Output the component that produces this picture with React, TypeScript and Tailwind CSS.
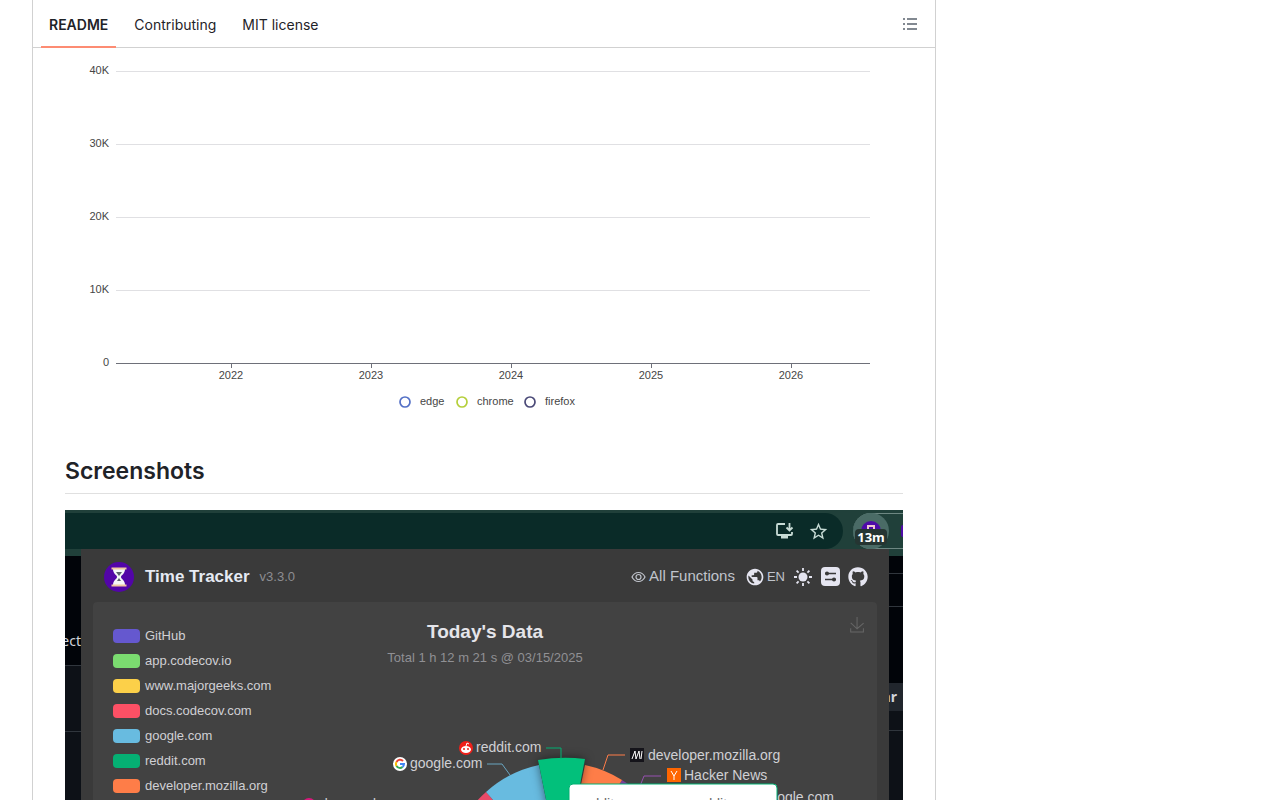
import { ReactNode } from "react";
import { FaGithub } from "react-icons/fa";
import { MdPublic, MdStarBorder } from "react-icons/md";

const TABS = ["README", "Contributing", "MIT license"]

const Y_TICKS = [
  { label: "40K", y: 23 },
  { label: "30K", y: 96 },
  { label: "20K", y: 169 },
  { label: "10K", y: 242 },
  { label: "0", y: 315 },
]

const X_TICKS = [
  { label: "2022", x: 166 },
  { label: "2023", x: 306 },
  { label: "2024", x: 446 },
  { label: "2025", x: 586 },
  { label: "2026", x: 726 },
]

const BROWSERS = [
  { name: "edge", color: "#5470c6", x: 340 },
  { name: "chrome", color: "#b5cf3b", x: 397 },
  { name: "firefox", color: "#4b4a78", x: 465 },
]

const SITES = [
  { name: "GitHub", color: "bg-[#6558cf]" },
  { name: "app.codecov.io", color: "bg-[#7bdc70]" },
  { name: "www.majorgeeks.com", color: "bg-[#fcd049]" },
  { name: "docs.codecov.com", color: "bg-[#fd5065]" },
  { name: "google.com", color: "bg-[#68bbe0]" },
  { name: "reddit.com", color: "bg-[#05b073]" },
  { name: "developer.mozilla.org", color: "bg-[#fe7d48]" },
]

function Tabs() {
  return (
    <div className="flex h-12 items-stretch justify-between border-b border-[#d1d1d1] pl-2 pr-4">
      <nav className="-mb-px flex gap-2.5">
        {TABS.map((tab, i) => (
          <a
            key={tab}
            href="#"
            className={`flex items-center border-b-2 px-2 pt-1 text-sm text-[#1f2328] ${i === 0 ? "border-[#fd8c73] font-semibold" : "border-transparent"}`}
          >
            {tab}
          </a>
        ))}
      </nav>
      <button type="button" aria-label="Outline" className="flex items-center text-[#59636e]">
        <svg width="18" height="16" viewBox="0 0 18 16" fill="none" stroke="currentColor" strokeWidth="1.5">
          <path d="M6 3h10M6 8h10M6 13h10" />
          <path d="M2 3h2M2 8h2M2 13h2" />
        </svg>
      </button>
    </div>
  )
}

function UserChart() {
  return (
    <svg viewBox="0 0 838 392" className="block w-full font-['Liberation_Sans',sans-serif]" fontSize="11" fill="#464646">
      {Y_TICKS.map(({ label, y }) => (
        <g key={label}>
          <text x="44" y={y + 3} textAnchor="end">{label}</text>
          <path d={`M51 ${y + 0.5}H805`} stroke={label === "0" ? "#6e7079" : "#e0e0e3"} />
        </g>
      ))}
      {X_TICKS.map(({ label, x }) => (
        <g key={label}>
          <path d={`M${x + 0.5} 315v5`} stroke="#6e7079" />
          <text x={x} y="331" textAnchor="middle">{label}</text>
        </g>
      ))}
      {BROWSERS.map(({ name, color, x }) => (
        <g key={name}>
          <circle cx={x} cy="354" r="5" fill="#fff" stroke={color} strokeWidth="1.7" />
          <text x={x + 15} y="357">{name}</text>
        </g>
      ))}
    </svg>
  )
}

function BrowserBar() {
  return (
    <div className="flex h-[39px] bg-[#20403a] pt-[3px]">
      <div className="flex min-w-0 flex-1 items-center justify-end gap-3.5 rounded-r-full bg-[#0a2b28] pr-3.5 text-[#c8dcd6]">
        <svg width="19" height="18" viewBox="0 0 19 18" fill="none" stroke="currentColor" strokeWidth="1.8">
          <path d="M10 2H3a1 1 0 0 0-1 1v9a1 1 0 0 0 1 1h13a1 1 0 0 0 1-1v-2" />
          <path d="M14.500 1v7M11.500 5.500l3 3 3-3" />
          <path d="M6 15h7" strokeWidth="3" />
        </svg>
        <MdStarBorder size={21} />
      </div>
      <div className="flex w-[60px] pl-2.5">
        <div className="flex flex-1 items-center justify-between rounded-l-full border-y border-[#6d8782]">
          <div className="relative flex h-9 w-9 items-start justify-center rounded-full bg-[#4a6b66] pt-2">
            <svg width="20" height="20" viewBox="0 0 20 20">
              <circle cx="10" cy="10" r="10" fill="#4f0ba8" />
              <path d="M6 5h8M7 6v4M13 6v4" stroke="#efc9d0" strokeWidth="2" />
            </svg>
            <span className="absolute top-4 rounded bg-[#253532] px-0.5 font-['Noto_Sans'] text-[13px] leading-4 font-bold text-white">13m</span>
          </div>
          <span className="h-3 w-0.5 rounded-l bg-[#4f0ba8]" />
        </div>
      </div>
    </div>
  )
}

function Hourglass() {
  return (
    <svg width="30" height="30" viewBox="0 0 30 30">
      <circle cx="15" cy="15" r="15" fill="#5205a8" />
      <path d="M9 7h12c0 5-4 6-4 8s4 3 4 8H9c0-5 4-6 4-8s-4-3-4-8z" fill="#f4f6f8" />
      <path d="M12 10h6l-3 4zM15 16l2 3h-4z" fill="#59616b" />
      <path d="M7.500 6.500h15M7.500 23.500h15" stroke="#efc9a0" strokeWidth="2" />
    </svg>
  )
}

function PopupHeader() {
  return (
    <header className="flex h-[53px] items-center justify-between pt-0.5 pl-[23px] pr-[21px]">
      <div className="flex items-center">
        <Hourglass />
        <span className="ml-[11px] text-[17px] font-bold text-[#e5eaf3]">Time Tracker</span>
        <span className="ml-2.5 text-[13px] text-[#8d8d91]">v3.3.0</span>
      </div>
      <div className="flex items-center text-[#e5e5f0]">
        <a href="#" className="flex items-center gap-[3px] text-[15px] text-[#c0c4cc]">
          <svg width="15" height="12" viewBox="0 0 15 12" fill="none" stroke="currentColor" strokeWidth="1.2">
            <path d="M1 6c3-6 10-6 13 0-3 6-10 6-13 0z" />
            <circle cx="7.500" cy="6" r="2.500" />
          </svg>
          All Functions
        </a>
        <button type="button" className="ml-2.5 flex items-center gap-0.5 text-[13px] text-[#c0c4cc]">
          <MdPublic size={20} className="text-[#e5e5f0]" />
          EN
        </button>
        <button type="button" aria-label="Theme" className="ml-2">
          <svg width="20" height="20" viewBox="0 0 20 20" stroke="currentColor" strokeWidth="1.800">
            <circle cx="10" cy="10" r="4.500" fill="currentColor" stroke="none" />
            <path d="M10 1v3M10 16v3M1 10h3M16 10h3M3.600 3.600l2 2M14.400 14.400l2 2M3.600 16.400l2-2M14.400 5.600l2-2" />
          </svg>
        </button>
        <button type="button" aria-label="Settings" className="ml-2">
          <svg width="19" height="19" viewBox="0 0 19 19">
            <rect width="19" height="19" rx="4" fill="currentColor" />
            <path d="M4 6.500h11M4 12.500h11" stroke="#3a3a3a" strokeWidth="1.500" />
            <circle cx="6" cy="6.500" r="2" fill="#3a3a3a" />
            <circle cx="13" cy="12.500" r="2" fill="#3a3a3a" />
          </svg>
        </button>
        <a href="#" aria-label="GitHub" className="ml-2">
          <FaGithub size={20} />
        </a>
      </div>
    </header>
  )
}

function SitePie() {
  return (
    <svg viewBox="0 0 784 300" className="block w-full" fontSize="14" fill="#d0d0d4">
      <path d="M469 276L529 178A115 115 0 0 1 584 276z" fill="#7b3f98" />
      <path d="M469 276L492 163A115 115 0 0 1 529 178z" fill="#fe7d48" />
      <path d="M469 276L354 276A115 115 0 0 1 393 190z" fill="#e84a68" />
      <path d="M469 276L393 190A115 115 0 0 1 446 163z" fill="#68bbe0" />
      <path d="M469 276L445 158Q469 154 492 157z" fill="#02c07b" className="drop-shadow-[0_0_5px_rgba(0,0,0,0.5)]" />
      <g fill="none">
        <path d="M453 146h15v11" stroke="#02b073" />
        <path d="M394 162h15l8 11" stroke="#68a5c0" />
        <path d="M532 153h-17l-5 15" stroke="#fe7d48" />
        <path d="M568 174h-17l-4 10" stroke="#9650b0" />
      </g>
      <circle cx="373" cy="146" r="7" fill="#f0201a" />
      <ellipse cx="373" cy="147.500" rx="5" ry="3.500" fill="#fff" />
      <path d="M373 144l1-3 2 1" fill="none" stroke="#fff" />
      <circle cx="371" cy="147" r="1" fill="#f0201a" />
      <circle cx="375" cy="147" r="1" fill="#f0201a" />
      <text x="383" y="150">reddit.com</text>
      <circle cx="307" cy="162" r="7" fill="#fff" />
      <g fill="none" strokeWidth="2">
        <path d="M303.500 160a4 4 0 0 1 6.500-1" stroke="#ea4335" />
        <path d="M303.500 160a4 4 0 0 0 0 4" stroke="#fbbc05" />
        <path d="M303.500 164a4 4 0 0 0 6 1" stroke="#34a853" />
        <path d="M309.500 165a4 4 0 0 0 1.500-3h-4" stroke="#4285f4" />
      </g>
      <text x="317" y="166">google.com</text>
      <rect x="537" y="146" width="14" height="14" fill="#15141a" />
      <path d="M539 157l3-8 1 8 3-8 1 8M549 149l-1 8" fill="none" stroke="#fff" />
      <text x="555" y="158">developer.mozilla.org</text>
      <rect x="574" y="166" width="14" height="14" fill="#ff6600" />
      <path d="M578 169l3 5 3-5M581 174v4" fill="none" stroke="#fff" />
      <text x="591" y="178">Hacker News</text>
      <text x="741" y="200" textAnchor="end">google.com</text>
      <circle cx="216" cy="203" r="7" fill="#d8187c" />
      <text x="227" y="207">docs.codecov.com</text>
      <rect x="476" y="182" width="208" height="90" rx="4" fill="#fff" stroke="#02b073" />
      <text x="486" y="207" fill="#666">reddit.com</text>
      <text x="599" y="207" fill="#666">reddit.com</text>
    </svg>
  )
}

function Popup() {
  return (
    <div className="min-w-0 flex-1 bg-[#3a3a3a] font-['Liberation_Sans',sans-serif]">
      <PopupHeader />
      <div className="mx-3 grid rounded bg-[#424242]">
        <div className="col-start-1 row-start-1">
          <SitePie />
        </div>
        <div className="col-start-1 row-start-1 pt-[17px] text-center">
          <h3 className="text-[19px] leading-[26px] font-bold text-[#e5e5ea]">Today&apos;s Data</h3>
          <p className="text-[13px] leading-[26px] text-[#909094]">Total 1 h 12 m 21 s @ 03/15/2025</p>
        </div>
        <ul className="col-start-1 row-start-1 justify-self-start pl-5 pt-[21px] text-[13px] text-[#d0d0d4]">
          {SITES.map((site) => (
            <li key={site.name} className="flex h-[25px] items-center gap-[5px]">
              <span className={`h-[14px] w-[27px] rounded ${site.color}`} />
              {site.name}
            </li>
          ))}
        </ul>
        <button type="button" aria-label="Save image" className="z-10 col-start-1 row-start-1 mr-3 mt-3.5 self-start justify-self-end text-[#666]">
          <svg width="16" height="17" viewBox="-2 -2 62 62" fill="none" stroke="currentColor" strokeWidth="4">
            <path d="M4.700 22.900L29.300 45.500 54.700 23.400M4.600 43.600V58h49.200V43.600M29.200 45.100V0" />
          </svg>
        </button>
      </div>
    </div>
  )
}

function Strip({ className, children }: { className: string, children: ReactNode }) {
  return (
    <div className={`flex shrink-0 flex-col overflow-hidden border-t-[7px] border-[#20403a] bg-[#0d1117] font-['Noto_Sans',sans-serif] text-sm text-[#d0d4da] ${className}`}>
      {children}
    </div>
  )
}

export default function App() {
  return (
    <div className="flex h-screen overflow-hidden bg-white pl-8 font-['Inter',sans-serif] text-[#1f2328]">
      <main className="min-w-0 flex-1 border-x border-[#d1d1d1]">
        <Tabs />
        <article className="px-8">
          <UserChart />
          <h2 className="mt-4 border-b border-[#e0e0e0] pb-[7px] text-[23px] leading-[30px] font-semibold">Screenshots</h2>
          <div className="mt-4 overflow-hidden">
            <BrowserBar />
            <div className="flex">
              <Strip className="w-4">
                <div className="flex h-[110px] items-end justify-end border-b border-[#30363d] bg-[#010409] pb-3.5">ect</div>
                <div className="h-[66px] border-b border-[#30363d]" />
              </Strip>
              <Popup />
              <Strip className="w-3.5">
                <div className="h-[18px] border-b border-[#30363d] bg-[#010409]" />
                <div className="h-[33px] border-b border-[#30363d] bg-[#010409]" />
                <div className="h-[76px] bg-[#010409]" />
                <div className="flex h-7 items-center justify-end bg-[#21262d] pr-1.5 font-bold">ar</div>
                <div className="h-5 border-b border-[#30363d]" />
              </Strip>
            </div>
          </div>
        </article>
      </main>
      <aside className="w-[344px] shrink-0" />
    </div>
  )
}
